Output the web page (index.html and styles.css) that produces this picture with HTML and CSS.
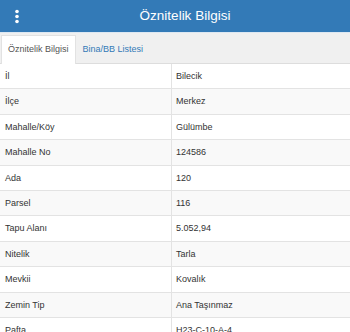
FILE: index.html
```html
<!DOCTYPE html>
<html lang="tr">
<head>
<meta charset="utf-8">
<link rel="stylesheet" href="styles.css">
</head>
<body>
<header class="appbar">
  <div class="menu">
    <svg width="6" height="16" viewBox="0 0 6 16"><circle cx="3" cy="2.5" r="1.8" fill="#fff"/><circle cx="3" cy="7.5" r="1.8" fill="#fff"/><circle cx="3" cy="12.5" r="1.8" fill="#fff"/></svg>
  </div>
  <h1 class="title">Öznitelik Bilgisi</h1>
</header>
<nav class="tabs">
  <a class="tab active">Öznitelik Bilgisi</a>
  <a class="tab">Bina/BB Listesi</a>
</nav>
<div class="attrs">
  <div class="row"><div class="key">İl</div><div class="val">Bilecik</div></div>
  <div class="row"><div class="key">İlçe</div><div class="val">Merkez</div></div>
  <div class="row"><div class="key">Mahalle/Köy</div><div class="val">Gülümbe</div></div>
  <div class="row"><div class="key">Mahalle No</div><div class="val">124586</div></div>
  <div class="row"><div class="key">Ada</div><div class="val">120</div></div>
  <div class="row"><div class="key">Parsel</div><div class="val">116</div></div>
  <div class="row"><div class="key">Tapu Alanı</div><div class="val">5.052,94</div></div>
  <div class="row"><div class="key">Nitelik</div><div class="val">Tarla</div></div>
  <div class="row"><div class="key">Mevkii</div><div class="val">Kovalık</div></div>
  <div class="row"><div class="key">Zemin Tip</div><div class="val">Ana Taşınmaz</div></div>
  <div class="row"><div class="key">Pafta</div><div class="val">H23-C-10-A-4</div></div>
</div>
</body>
</html>
```
FILE: styles.css
```css
html, body {
  margin: 0;
  padding: 0;
  background: #fff;
  font-family: "Liberation Sans", Arial, sans-serif;
  color: #333;
  overflow: hidden;
}
.appbar {
  display: flex;
  align-items: center;
  height: 32px;
  background: #337ab7;
}
.menu {
  width: 34px;
  display: flex;
  justify-content: center;
  align-items: center;
  height: 32px;
}
.menu svg { display: block; margin-top: 1px; }
.title {
  flex: 1;
  margin: 0;
  padding-right: 14px;
  text-align: center;
  color: #fff;
  font-weight: normal;
  font-size: 13.5px;
  line-height: 32px;
}
.tabs {
  display: flex;
  align-items: flex-end;
  height: 28px;
  padding-top: 2px;
  background: #f0f0f0;
  border-top: 1px solid #dde8f2;
  border-bottom: 1px solid #dddddd;
}
.tab {
  display: block;
  height: 27px;
  line-height: 27px;
  padding: 0 6px;
  font-size: 9px;
  color: #337ab7;
  border: 1px solid transparent;
  border-bottom: 0;
}
.tab.active {
  margin-left: 1px;
  background: #fff;
  color: #555;
  border-color: #e2e2e2;
  height: 28px;
  margin-bottom: -1px;
}
.attrs {
  font-size: 9px;
}
.row {
  display: flex;
  border-bottom: 1px solid #e3e3e3;
}
.row:nth-child(even) {
  background: #f9f9f9;
}
.key, .val {
  padding: 5px 5px;
  line-height: 14.4px;
  white-space: nowrap;
}
.key {
  width: 172px;
  box-sizing: border-box;
  border-right: 1px solid #e3e3e3;
  flex: none;
}
.val {
  flex: 1;
  padding-left: 4px;
}
```
